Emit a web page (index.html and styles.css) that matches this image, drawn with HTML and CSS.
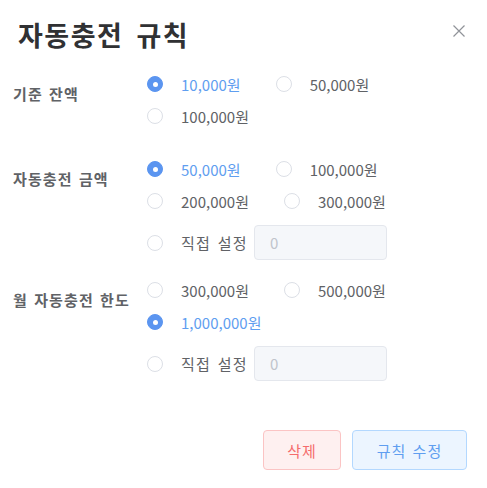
FILE: index.html
```html
<!DOCTYPE html>
<html lang="ko">
<head>
<meta charset="utf-8">
<title>자동충전 규칙</title>
<link rel="stylesheet" href="styles.css">
</head>
<body>
<div class="dialog">
  <header class="head">
    <h1 class="title">자동충전 규칙</h1>
    <button class="close" aria-label="닫기">
      <svg width="12" height="12" viewBox="0 0 12 12"><path d="M0.5 0.5L11.5 11.5M11.5 0.5L0.5 11.5" stroke="#909399" stroke-width="1.2" fill="none"/></svg>
    </button>
  </header>
  <div class="form">
    <div class="field">
      <div class="label">기준 잔액</div>
      <div class="group">
        <label class="opt checked"><span class="radio"></span>10,000원</label>
        <label class="opt"><span class="radio"></span>50,000원</label>
        <label class="opt"><span class="radio"></span>100,000원</label>
      </div>
    </div>
    <div class="field sec2">
      <div class="label">자동충전 금액</div>
      <div class="group">
        <label class="opt checked"><span class="radio"></span>50,000원</label>
        <label class="opt"><span class="radio"></span>100,000원</label>
        <label class="opt"><span class="radio"></span>200,000원</label>
        <label class="opt"><span class="radio"></span>300,000원</label>
        <div class="custom"><span class="radio"></span><span class="custom-text">직접 설정</span><input class="input" placeholder="0"></div>
      </div>
    </div>
    <div class="field sec3">
      <div class="label">월 자동충전 한도</div>
      <div class="group">
        <label class="opt"><span class="radio"></span>300,000원</label>
        <label class="opt"><span class="radio"></span>500,000원</label>
        <label class="opt checked"><span class="radio"></span>1,000,000원</label>
        <div class="custom"><span class="radio"></span><span class="custom-text">직접 설정</span><input class="input" placeholder="0"></div>
      </div>
    </div>
  </div>
  <footer class="foot">
    <button class="btn danger">삭제</button>
    <button class="btn primary">규칙 수정</button>
  </footer>
</div>
</body>
</html>
```
FILE: styles.css
```css
* { box-sizing: border-box; }
html, body { margin: 0; background: #fff; }
body {
  font-family: "Noto Sans CJK KR", "Noto Sans", sans-serif;
  color: #606266;
  font-size: 15px;
}
.dialog {
  width: 487px;
  height: 488px;
  padding: 0 20px 0 13px;
}
.head {
  display: flex;
  align-items: center;
  justify-content: space-between;
  height: 68px;
  padding-top: 2px;
}
.title {
  margin: 0 0 0 5px;
  font-size: 27px;
  font-weight: 700;
  color: #303133;
  line-height: 38px;
  letter-spacing: 1.5px;
  word-spacing: 4px;
}
.close {
  border: 0;
  background: none;
  padding: 0;
  margin: 0 2px 8px 0;
  width: 12px;
  height: 12px;
  display: flex;
}
.field {
  display: flex;
  align-items: flex-start;
}
.sec2 { margin-top: 21px; }
.sec3 { margin-top: 14px; }
.label {
  width: 134px;
  flex: none;
  padding-top: 10px;
  line-height: 32px;
  font-weight: 700;
  color: #606266;
  font-size: 15px;
  letter-spacing: 1.1px;
  word-spacing: 1px;
  white-space: nowrap;
}
.group {
  width: 320px;
  display: flex;
  flex-wrap: wrap;
}
.opt {
  display: inline-flex;
  align-items: center;
  height: 32px;
  margin-right: 35px;
  white-space: nowrap;
  color: #606266;
}
.opt.checked { color: #5f9ef0; }
.radio {
  width: 16px;
  height: 16px;
  border-radius: 50%;
  border: 1px solid #dcdfe6;
  background: #fff;
  margin-right: 18px;
  flex: none;
  position: relative;
}
.checked .radio {
  border-color: #5b95f0;
  background: #5b95f0;
}
.checked .radio::after {
  content: "";
  position: absolute;
  left: 50%;
  top: 50%;
  width: 5px;
  height: 5px;
  margin: -2.5px 0 0 -2.5px;
  background: #fff;
  border-radius: 50%;
}
.custom {
  flex-basis: 100%;
  display: flex;
  align-items: center;
  margin-top: 8px;
}
.custom-text {
  white-space: nowrap;
  letter-spacing: 1.3px;
  word-spacing: 1px;
}
.input {
  margin-left: 6px;
  width: 133px;
  height: 35px;
  border: 1px solid #e4e7ed;
  border-radius: 4px;
  background: #f5f7fa;
  padding: 0 15px;
  font-family: inherit;
  font-size: 15px;
  color: #c0c4cc;
}
.input::placeholder { color: #c0c4cc; }
.foot {
  display: flex;
  justify-content: flex-end;
  gap: 11px;
  margin-top: 49px;
}
.btn {
  height: 40px;
  border-radius: 4px;
  font-family: inherit;
  font-size: 15px;
  padding: 0;
  letter-spacing: 1px;
  word-spacing: 1px;
}
.danger {
  width: 78px;
  background: #fef0f0;
  border: 1px solid #fbc4c4;
  color: #f56c6c;
}
.primary {
  width: 115px;
  background: #ecf5ff;
  border: 1px solid #b3d8ff;
  color: #5f9ef0;
}
```
